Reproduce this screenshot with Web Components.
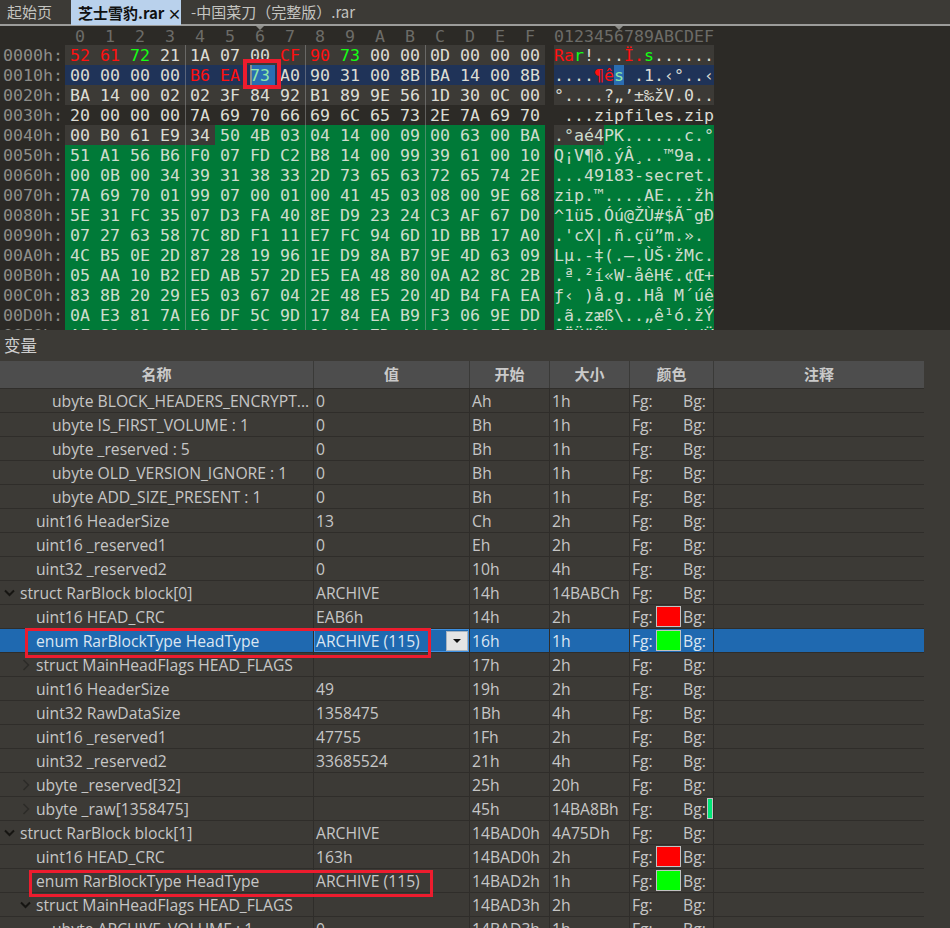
<!DOCTYPE html>
<html lang="zh">
<head>
<meta charset="utf-8">
<title>010 Editor</title>
<style>
  html, body { margin: 0; height: 928px; overflow: hidden; background: #3c3a36; }
</style>
</head>
<body>
<tab-bar>
  <tab-item>起始页</tab-item>
  <tab-item active>芝士雪豹.rar<span slot="close">×</span></tab-item>
  <tab-item>-中国菜刀（完整版）.rar</tab-item>
</tab-bar>
<hex-view></hex-view>
<var-panel>
  <var-row depth="2" name="ubyte BLOCK_HEADERS_ENCRYPT..." value="0" start="Ah" size="1h"></var-row>
  <var-row depth="2" name="ubyte IS_FIRST_VOLUME : 1" value="0" start="Bh" size="1h"></var-row>
  <var-row depth="2" name="ubyte _reserved : 5" value="0" start="Bh" size="1h"></var-row>
  <var-row depth="2" name="ubyte OLD_VERSION_IGNORE : 1" value="0" start="Bh" size="1h"></var-row>
  <var-row depth="2" name="ubyte ADD_SIZE_PRESENT : 1" value="0" start="Bh" size="1h"></var-row>
  <var-row depth="1" name="uint16 HeaderSize" value="13" start="Ch" size="2h"></var-row>
  <var-row depth="1" name="uint16 _reserved1" value="0" start="Eh" size="2h"></var-row>
  <var-row depth="1" name="uint32 _reserved2" value="0" start="10h" size="4h"></var-row>
  <var-row depth="0" twisty="open" name="struct RarBlock block[0]" value="ARCHIVE" start="14h" size="14BABCh"></var-row>
  <var-row depth="1" name="uint16 HEAD_CRC" value="EAB6h" start="14h" size="2h" fg="#ff0000"></var-row>
  <var-row depth="1" selected name="enum RarBlockType HeadType" value="ARCHIVE (115)" start="16h" size="1h" fg="#00ff00"></var-row>
  <var-row depth="1" twisty="closed" name="struct MainHeadFlags HEAD_FLAGS" value="" start="17h" size="2h"></var-row>
  <var-row depth="1" name="uint16 HeaderSize" value="49" start="19h" size="2h"></var-row>
  <var-row depth="1" name="uint32 RawDataSize" value="1358475" start="1Bh" size="4h"></var-row>
  <var-row depth="1" name="uint16 _reserved1" value="47755" start="1Fh" size="2h"></var-row>
  <var-row depth="1" name="uint32 _reserved2" value="33685524" start="21h" size="4h"></var-row>
  <var-row depth="1" twisty="closed" name="ubyte _reserved[32]" value="" start="25h" size="20h"></var-row>
  <var-row depth="1" twisty="closed" name="ubyte _raw[1358475]" value="" start="45h" size="14BA8Bh" bg="#00e676"></var-row>
  <var-row depth="0" twisty="open" name="struct RarBlock block[1]" value="ARCHIVE" start="14BAD0h" size="4A75Dh"></var-row>
  <var-row depth="1" name="uint16 HEAD_CRC" value="163h" start="14BAD0h" size="2h" fg="#ff0000"></var-row>
  <var-row depth="1" name="enum RarBlockType HeadType" value="ARCHIVE (115)" start="14BAD2h" size="1h" fg="#00ff00"></var-row>
  <var-row depth="1" twisty="open" name="struct MainHeadFlags HEAD_FLAGS" value="" start="14BAD3h" size="2h"></var-row>
  <var-row depth="2" name="ubyte ARCHIVE_VOLUME : 1" value="0" start="14BAD3h" size="1h"></var-row>
</var-panel>

<script>
const UI_FONT = '"Open Sans", "Noto Sans CJK SC", sans-serif';

class TabBar extends HTMLElement {
  constructor() {
    super();
    this.attachShadow({ mode: "open" });
    this.shadowRoot.innerHTML = `
      <style>
        :host {
          display: flex;
          height: 24px;
          padding-bottom: 2px;
          background: #3c3a36;
          position: relative;
        }
        .line { position: absolute; left: 0; right: 0; top: 24px; height: 2px; background: #9c9c9a; }
      </style>
      <slot></slot>
      <div class="line"></div>
    `;
  }
}
customElements.define("tab-bar", TabBar);

class TabItem extends HTMLElement {
  constructor() {
    super();
    this.attachShadow({ mode: "open" });
    this.shadowRoot.innerHTML = `
      <style>
        :host {
          display: flex;
          align-items: center;
          height: 24px;
          padding: 0 7px;
          margin-right: 12px;
          font: 15px/24px "Noto Sans CJK SC", "Open Sans", sans-serif;
          color: #c4c4c0;
          white-space: nowrap;
          position: relative;
          z-index: 1;
        }
        :host([active]) {
          height: 25px;
          margin-right: 3px;
          background: #b9d1ec;
          color: #111;
          font-weight: 700;
          width: 96px;
          align-self: flex-start;
        }
        ::slotted([slot="close"]) { font-size: 14px; margin-left: 3px; }
      </style>
      <slot></slot><slot name="close"></slot>
    `;
  }
}
customElements.define("tab-item", TabItem);

const HEX_ROWS = [
  ["0000h", "52 61 72 21 1A 07 00 CF 90 73 00 00 0D 00 00 00", "Rar!...Ï.s......"],
  ["0010h", "00 00 00 00 B6 EA 73 A0 90 31 00 8B BA 14 00 8B", "....¶ês\u00a0.1.‹°..‹"],
  ["0020h", "BA 14 00 02 02 3F 84 92 B1 89 9E 56 1D 30 0C 00", "°....?„’±‰žV.0.."],
  ["0030h", "20 00 00 00 7A 69 70 66 69 6C 65 73 2E 7A 69 70", " ...zipfiles.zip"],
  ["0040h", "00 B0 61 E9 34 50 4B 03 04 14 00 09 00 63 00 BA", ".°aé4PK......c.°"],
  ["0050h", "51 A1 56 B6 F0 07 FD C2 B8 14 00 99 39 61 00 10", "Q¡V¶ð.ýÂ¸..™9a.."],
  ["0060h", "00 0B 00 34 39 31 38 33 2D 73 65 63 72 65 74 2E", "...49183-secret."],
  ["0070h", "7A 69 70 01 99 07 00 01 00 41 45 03 08 00 9E 68", "zip.™....AE...žh"],
  ["0080h", "5E 31 FC 35 07 D3 FA 40 8E D9 23 24 C3 AF 67 D0", "^1ü5.Óú@ŽÙ#$Ã¯gÐ"],
  ["0090h", "07 27 63 58 7C 8D F1 11 E7 FC 94 6D 1D BB 17 A0", ".'cX|.ñ.çü”m.».\u00a0"],
  ["00A0h", "4C B5 0E 2D 87 28 19 96 1E D9 8A B7 9E 4D 63 09", "Lµ.-‡(.–.ÙŠ·žMc."],
  ["00B0h", "05 AA 10 B2 ED AB 57 2D E5 EA 48 80 0A A2 8C 2B", ".ª.²í«W-åêH€.¢Œ+"],
  ["00C0h", "83 8B 20 29 E5 03 67 04 2E 48 E5 20 4D B4 FA EA", "ƒ‹ )å.g..Hå M´úê"],
  ["00D0h", "0A E3 81 7A E6 DF 5C 9D 17 84 EA B9 F3 06 9E DD", ".ã.zæß\\..„ê¹ó.žÝ"],
  ["00E0h", "AF 81 40 87 4B 7B 80 01 11 48 7D 44 84 00 FF 8A", "¯ÏÜ¨Ñ\\.:.|.&.\\/Ÿ"],
];

const LIGHT = "#3c3a36", NAVY = "#1f3358", DARK = "#2c2a26", GREEN = "#007a38", BLUE = "#2a6db2";

// colours of the bytes picked out by the template
const BYTE_COLORS = {
  "0:0": "#ff1010", "0:1": "#ff1010", "0:2": "#14ff14", "0:7": "#ff1010", "0:8": "#ff1010", "0:9": "#14ff14",
  "1:4": "#ff1010", "1:5": "#ff1010", "1:6": "#8fe8a8",
};

function cellBg(row, col) {
  if (row === 1) return NAVY;
  if (row === 0 || row === 2) return LIGHT;
  if (row === 3) return DARK;
  if (row === 4) return col < 5 ? LIGHT : GREEN;
  return GREEN;
}

class HexView extends HTMLElement {
  constructor() {
    super();
    this.attachShadow({ mode: "open" });
  }

  connectedCallback() {
    this.render();
  }

  asciiRow(text, r) {
    let html = "";
    for (let c = 0; c < 16; c++) {
      const ch = text[c].replace("<", "&lt;");
      const color = BYTE_COLORS[r + ":" + c];
      if (r === 1 && c === 6) html += `<span class="hit" style="color:${color}">${ch}</span>`;
      else if (color) html += `<span style="color:${color}">${ch}</span>`;
      else html += ch;
    }
    return html;
  }

  render() {
    const digits = "0123456789ABCDEF".split("");
    const head = digits.map((d) => `<span class="byte">${d}</span>`).join("");
    const rows = HEX_ROWS.map(([off, hex, ascii], r) => {
      const cells = hex.split(" ").map((b, c) => {
        const cls = ["byte"];
        if (c % 4 === 0 && c > 0) cls.push("group");
        if (cellBg(r, c) === GREEN) cls.push("ongreen");
        if (r === 1 && c === 6) cls.push("cursor");
        const color = BYTE_COLORS[r + ":" + c];
        const style = `background-color:${cellBg(r, c)};${color ? "color:" + color : ""}`;
        return `<span class="${cls.join(" ")}" style="${style}">${b}</span>`;
      }).join("");
      const a = cellBg(r, 0), b = cellBg(r, 15);
      const asciiBg = `linear-gradient(to right, ${a} 50px, ${b} 50px)`;
      const tone = b === GREEN ? "ongreen" : "";
      return `
        <div class="row">
          <span class="off">${off}:</span>
          <div class="bytes">${cells}</div>
          <div class="ascii ${tone}" style="background:${asciiBg}">${this.asciiRow(ascii, r)}</div>
        </div>`;
    }).join("");

    this.shadowRoot.innerHTML = `
      <style>
        :host {
          display: block;
          height: 304px;
          overflow: hidden;
          background: #2c2a26;
          position: relative;
          font: 16.61px/22px "DejaVu Sans Mono", monospace;
          color: #dcdcd4;
        }
        .row { display: flex; height: 20px; }
        .head { height: 19px; color: #6c6c68; }
        .head .ascii { background: none; }
        .off { width: 65px; padding-left: 3px; box-sizing: border-box; color: #8e8e8a; white-space: pre; }
        .bytes { display: flex; width: 480px; }
        .byte { width: 30px; text-align: center; box-sizing: border-box; }
        .group { box-shadow: inset 1px 0 0 rgba(170,170,170,.42); }
        .ongreen { color: #cddccd; }
        .cursor {
          background-image: linear-gradient(to right, ${NAVY} 5px, #8c8c88 5px 7px, ${BLUE} 7px);
        }
        .ascii { margin-left: 9px; width: 160px; white-space: pre; }
        .hit { display: inline-block; height: 20px; background: ${BLUE}; }
        .mark { position: absolute; top: 0; width: 0; height: 0; border: 4px solid transparent; border-top-color: #8c8c88; border-bottom: 0; }
        .box { position: absolute; left: 243px; top: 33px; width: 38px; height: 30px; box-sizing: border-box; border: 4px solid #ed1c2e; }
      </style>
      <div class="row head">
        <span class="off"></span>
        <div class="bytes">${head}</div>
        <div class="ascii">0123456789ABCDEF</div>
      </div>
      ${rows}
      <i class="mark" style="left:256px"></i>
      <i class="mark" style="left:615px"></i>
      <div class="box"></div>
    `;
  }
}
customElements.define("hex-view", HexView);

class VarPanel extends HTMLElement {
  constructor() {
    super();
    this.attachShadow({ mode: "open" });
    this.shadowRoot.innerHTML = `
      <style>
        :host {
          display: block;
          position: relative;
          height: 598px;
          overflow: hidden;
          background: #3c3a36;
          font: 15.7px ${UI_FONT};
          color: #c6c6c6;
        }
        .title {
          height: 31px;
          padding-left: 4px;
          font: 16.5px/31px "Noto Sans CJK SC", sans-serif;
          color: #cfcfcf;
        }
        .head {
          display: grid;
          grid-template-columns: 314px 156px 80px 80px 84px 210px;
          width: 924px;
          height: 28px;
          box-sizing: border-box;
          background: #4d4d4d;
          border-bottom: 1px solid #302e2b;
          font: 700 15px/26px "Noto Sans CJK SC", sans-serif;
          color: #cacaca;
          text-align: center;
        }
        .head span { border-right: 1px solid #3a3a38; }
        .head span:last-child { border-right: 0; }
        .rows { width: 924px; }
        .box { position: absolute; box-sizing: border-box; border: 3px solid #ed1c2e; pointer-events: none; }
      </style>
      <div class="title">变量</div>
      <div class="head">
        <span>名称</span><span>值</span><span>开始</span><span>大小</span><span>颜色</span><span>注释</span>
      </div>
      <div class="rows"><slot></slot></div>
      <div class="box" style="left:25px;top:298px;width:406px;height:30px"></div>
      <div class="box" style="left:29px;top:540px;width:404px;height:27px"></div>
    `;
  }
}
customElements.define("var-panel", VarPanel);

class VarRow extends HTMLElement {
  constructor() {
    super();
    this.attachShadow({ mode: "open" });
  }

  connectedCallback() {
    this.render();
  }

  twisty(kind) {
    if (kind === "open") {
      return `<svg width="12" height="12" viewBox="0 0 12 12"><path d="M1 3.5 L5.5 8 L10 3.5" fill="none" stroke="#161512" stroke-width="2"/></svg>`;
    }
    if (kind === "closed") {
      return `<svg width="12" height="12" viewBox="0 0 12 12"><path d="M3.5 1 L8.5 6 L3.5 11" fill="none" stroke="#2c2b28" stroke-width="1.5"/></svg>`;
    }
    return "";
  }

  render() {
    const get = (n) => this.getAttribute(n) || "";
    const depth = Number(get("depth"));
    const fg = get("fg");
    const bg = get("bg");
    const selected = this.hasAttribute("selected");
    this.shadowRoot.innerHTML = `
      <style>
        :host {
          display: grid;
          grid-template-columns: 314px 156px 80px 80px 84px 210px;
          height: 24px;
          box-sizing: border-box;
          border-bottom: 1px solid #2f2d2a;
          line-height: 25px;
          white-space: nowrap;
        }
        :host([selected]) { background: #1f69b0; color: #dbe6f2; }
        .cell { border-right: 1px solid #2f2d2a; padding-left: 2px; box-sizing: border-box; overflow: hidden; }
        .cell:last-child { border-right: 0; }
        .name { display: flex; padding-left: ${depth * 16}px; }
        .tw { width: 16px; flex: none; padding: 6px 0 0 4px; box-sizing: border-box; line-height: 0; height: 23px; margin-right: 4px; }
        .tw svg { display: block; }
        .value { display: flex; justify-content: space-between; }
        .editing { box-shadow: inset 0 0 0 1px #3d8fe0; }
        .drop {
          width: 22px;
          height: 20px;
          margin: 2px 1px 0 0;
          box-sizing: border-box;
          background: #e4e4e4;
          border: 1px solid #a8b4c0;
          display: flex;
          align-items: center;
          justify-content: center;
        }
        .drop i { width: 0; height: 0; border: 4px solid transparent; border-top-color: #111; border-bottom: 0; }
        .color { display: grid; grid-template-columns: 24px 27px 24px 7px; }
        .sw { width: 25px; height: 21px; margin-top: 1px; box-sizing: border-box; border: 1px solid #c2c2c2; }
        .sw.thin { width: 6px; }
      </style>
      <div class="cell name">
        <span class="tw">${this.twisty(get("twisty"))}</span><span>${get("name")}</span>
      </div>
      <div class="cell value ${selected ? "editing" : ""}">
        <span>${get("value")}</span>${selected ? '<span class="drop"><i></i></span>' : ""}
      </div>
      <div class="cell">${get("start")}</div>
      <div class="cell">${get("size")}</div>
      <div class="cell color">
        <span>Fg:</span>
        <span>${fg ? `<div class="sw" style="background:${fg}"></div>` : ""}</span>
        <span>Bg:</span>
        <span>${bg ? `<div class="sw thin" style="background:${bg}"></div>` : ""}</span>
      </div>
      <div class="cell"></div>
    `;
  }
}
customElements.define("var-row", VarRow);
</script>
</body>
</html>
